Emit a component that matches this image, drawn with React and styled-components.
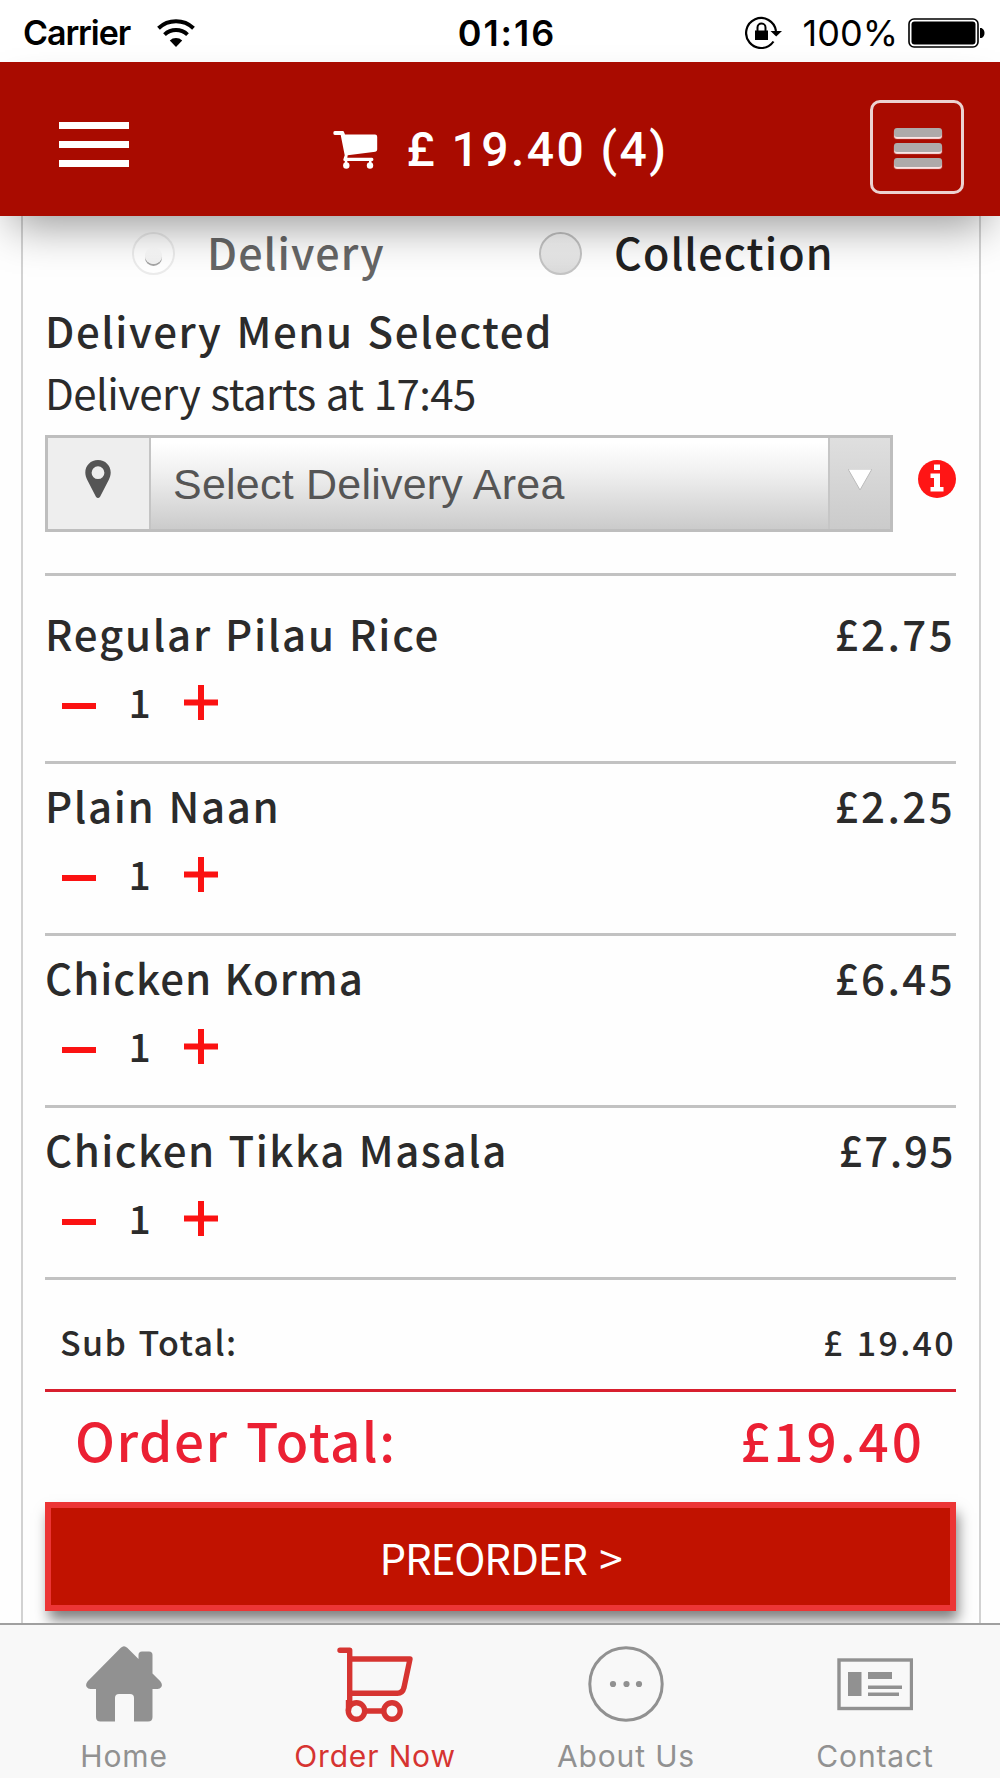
import React from 'react';
import styled, { createGlobalStyle } from 'styled-components';

const SANS = "'Noto Sans CJK SC', 'Noto Sans', sans-serif";
const SYS = "Inter, 'Liberation Sans', sans-serif";

const Global = createGlobalStyle`
  *, *::before, *::after { box-sizing: border-box; }
  body { margin: 0; background: #fff; }
  svg { display: block; flex: none; }
  button { border: 0; background: none; padding: 0; margin: 0; }
`;

const Screen = styled.div`
  width: 1000px;
  height: 1778px;
  display: flex;
  flex-direction: column;
  overflow: hidden;
  background: #fefefe;
  font-family: ${SANS};
  color: #2b2b2b;
`;

const Label = styled.span`
  display: block;
  white-space: pre;
  font-family: ${p => p.$font || SANS};
  font-size: ${p => p.$size}px;
  font-weight: ${p => p.$weight || 400};
  letter-spacing: ${p => p.$track || 0}px;
  word-spacing: ${p => p.$word || 0}px;
  line-height: ${p => p.$line || 50}px;
  color: ${p => p.$color || 'inherit'};
`;

const StatusBar = styled.div`
  height: 62px;
  flex: none;
  display: grid;
  grid-template-columns: 1fr auto 1fr;
  align-items: center;
  padding: 3px 15px 0 23px;
  background: #fff;
  color: #000;
`;
const Clock = styled(Label)`
  padding-left: 6px;
`;
const StatusGroup = styled.div`
  display: flex;
  align-items: center;
  gap: ${p => p.$gap}px;
  justify-content: ${p => (p.$end ? 'flex-end' : 'flex-start')};
`;

const Header = styled.header`
  height: 154px;
  flex: none;
  display: flex;
  align-items: center;
  justify-content: space-between;
  padding: 16px 36px 0 59px;
  background: #a90b00;
  position: relative;
  z-index: 2;
  box-shadow: 0 22px 42px -12px rgba(0, 0, 0, 0.4);
`;
const MenuButton = styled.button`
  display: grid;
  gap: 12px;
  width: 70px;
  margin-bottom: 5px;
`;
const MenuBar = styled.span`
  height: 7px;
  background: #fff;
`;
const CartSummary = styled.div`
  display: flex;
  align-items: center;
  gap: 28px;
  padding: 6px 0 0 3px;
  color: #fff;
`;
const ListButton = styled.button`
  width: 94px;
  height: 94px;
  padding: 1px 0 0 3px;
  border: 3px solid #ecd2d0;
  border-radius: 10px;
  display: flex;
  flex-direction: column;
  align-items: center;
  justify-content: center;
  gap: 6px;
`;
const ListBar = styled.span`
  width: 48px;
  height: 9px;
  border-radius: 3px;
  background: #aeaaaa;
  box-shadow: 0 2px 1px #fbe6e6;
`;

const Panel = styled.main`
  flex: 1;
  margin: 0 19px 0 21px;
  padding: 0 23px 0 22px;
  border-left: 2px solid #d2d2d2;
  border-right: 2px solid #d2d2d2;
`;
const Modes = styled.div`
  display: grid;
  grid-template-columns: 407px 1fr;
  height: 75px;
  padding-left: 87px;
`;
const Mode = styled.div`
  display: flex;
  align-items: center;
  gap: 32px;
`;
const ModeLabel = styled(Label)`
  padding-bottom: 5px;
`;
const Radio = styled.span`
  width: 43px;
  height: 43px;
  border-radius: 50%;
  display: grid;
  place-items: center;
  border: 2px solid ${p => (p.$checked ? '#ececec' : '#c4c4c4')};
  background: ${p => (p.$checked ? '#fff' : 'linear-gradient(#fbfbfb, #dadada)')};
`;
const Dot = styled.span`
  width: 17px;
  height: 17px;
  margin-top: 4px;
  border-radius: 50%;
  background: linear-gradient(#fff, #f0f0f0);
  box-shadow: 0 2px 0 #a5a5a5;
`;
const Notice = styled.div`
  padding-top: 8px;
`;
const AreaRow = styled.div`
  display: flex;
  align-items: center;
  justify-content: space-between;
  margin-top: 12px;
`;
const Select = styled.div`
  width: 848px;
  height: 97px;
  display: flex;
  border: 3px solid #bebebe;
  background: linear-gradient(#fff 5%, #f0f0f0 38%, #cbcbcb);
`;
const PinCell = styled.div`
  width: 103px;
  display: grid;
  place-items: center;
  background: #eee;
  border-right: 2px solid #c4c4c4;
  padding: 0 1px 9px 0;
`;
const SelectValue = styled.div`
  flex: 1;
  display: flex;
  align-items: center;
  padding-left: 22px;
`;
const ArrowCell = styled.div`
  width: 62px;
  display: grid;
  place-items: center;
  border-left: 2px solid #c6c6c6;
  background: linear-gradient(#dfdfdf, #cbcbcb);
  padding: 0 1px 8px 0;
`;
const InfoMark = styled.div`
  padding-bottom: 10px;
`;
const Items = styled.div`
  margin-top: 41px;
  border-top: 3px solid #c2c2c2;
  padding-top: 16px;
`;
const Item = styled.div`
  height: 172px;
  padding-top: 16px;
  border-bottom: 3px solid #c2c2c2;
`;
const Split = styled.div`
  display: flex;
  justify-content: space-between;
  padding: ${p => p.$pad || 0};
`;
const Qty = styled.div`
  display: flex;
  align-items: center;
  height: 40px;
  margin-top: 24px;
  padding-left: 17px;
`;
const Count = styled.div`
  width: 88px;
  padding: 0 1px 3px 0;
  display: flex;
  justify-content: center;
`;
const SubTotal = styled(Split)`
  height: 112px;
  align-items: center;
  border-bottom: 3px solid #d81f2e;
`;
const OrderTotal = styled(Split)`
  height: 110px;
  align-items: center;
  color: #eb2033;
`;
const Preorder = styled.button`
  display: flex;
  width: 100%;
  height: 109px;
  align-items: center;
  justify-content: center;
  border: 6px solid #ec3535;
  background: #c11200;
  color: #fff;
  box-shadow: 3px 10px 13px -1px rgba(0, 0, 0, 0.5);
`;

const TabBar = styled.nav`
  height: 155px;
  flex: none;
  position: relative;
  z-index: 1;
  display: grid;
  grid-template-columns: 248px 254px 248px 250px;
  border-top: 2px solid #a0a0a0;
  background: #f8f8f8;
`;
const Tab = styled.div`
  display: flex;
  flex-direction: column;
  align-items: center;
  gap: 11px;
  padding-top: 21px;
  color: ${p => (p.$active ? '#d63431' : '#919191')};
`;

const Minus = () => (
  <svg width="34" height="36" viewBox="0 0 34 36"><path d="M0 22h34" stroke="#fb1212" strokeWidth="6" /></svg>
);
const Plus = () => (
  <svg width="34" height="36" viewBox="0 0 34 36"><path d="M0 18.500h34M17 1v35" stroke="#fb1212" strokeWidth="6" /></svg>
);
const Wifi = () => (
  <svg width="38" height="28" viewBox="0 0 38 28">
    <g fill="none" stroke="#000" strokeWidth="4">
      <path d="M1.500 9.200a25.500 25.500 0 0 1 35 0" />
      <path d="M7.500 15.600a17 17 0 0 1 23 0" />
    </g>
    <path d="M12.800 21.500a9 9 0 0 1 12.400 0L19 28z" />
  </svg>
);
const RotationLock = () => (
  <svg width="37" height="33" viewBox="0 0 37 33">
    <path d="M28.500 25.500A15 15 0 1 1 31 15" fill="none" stroke="#000" strokeWidth="2.200" />
    <path d="M25.500 15h11.500L31.200 20.500z" />
    <path d="M10 14.500h13v9.500H10z" />
    <path d="M12.500 15v-3.500a4 4 0 0 1 8 0V15" fill="none" stroke="#000" strokeWidth="2" />
  </svg>
);
const Battery = () => (
  <svg width="77" height="30" viewBox="0 0 77 30">
    <rect x="1" y="1" width="69" height="28" rx="5" fill="none" stroke="#000" strokeWidth="1.600" />
    <rect x="3.500" y="3.500" width="64" height="23" rx="3" />
    <path d="M72 10h1.500q3 1.500 3 5t-3 5H72z" />
  </svg>
);
const SolidCart = () => (
  <svg width="45" height="38" viewBox="0 0 45 38" fill="#fff">
    <path d="M1.800 0h7.700q1.400 0 1.700 1.400l.8 2.200H42q2.200 0 2.200 2.200V18.500q0 1.900-1.900 2.200L14.700 24.300l-.4 2.500H39q1.400 0 1.400 1.600T39 30H11.800q-1.600 0-1.500-1.500l1.400-4.200L7.700 4H1.800Q.3 4 .3 2T1.800 0z" />
    <path d="M11.800 29h2.500v3h-2.500zM36 29h2.500v3H36z" />
    <circle cx="13.300" cy="34.500" r="3.200" /><circle cx="37" cy="34.500" r="3.200" />
  </svg>
);
const Pin = () => (
  <svg width="26" height="38" viewBox="0 0 26 38">
    <path fill="#555" fillRule="evenodd" d="M13 0c7.200 0 12.700 5.500 12.700 12.500 0 3-.9 5.200-2 7.400L15.200 36.500q-2.200 3-4.400 0L2.300 19.900C1.200 17.700.3 15.500.3 12.500.3 5.500 5.800 0 13 0zm0 6.300a6.400 6.400 0 1 0 0 12.800 6.400 6.400 0 0 0 0-12.800z" />
  </svg>
);
const Info = () => (
  <svg width="38" height="38" viewBox="0 0 38 38">
    <circle cx="19" cy="19" r="19" fill="#ff1515" />
    <path fill="#fff" d="M16 4.500h6v5.500h-6zM12.500 13.500h9.500v13.500h3.500v4.500h-13v-4.500h3.500v-9h-3.500z" />
  </svg>
);
const Home = () => (
  <svg width="76" height="76" viewBox="0 0 76 76" fill="currentColor">
    <path d="M34.800 1.800q3.200-3 6.400 0L52.500 13V9q0-3.500 3.500-3.500h7q3.500 0 3.500 3.500v18.500l7.800 7.700q2.600 3.300 1 5.800-1.200 2-3.800 2H66.500v28q0 4.500-4.500 4.500H48V52q0-4-4-4H33q-4 0-4 4v23.500H14.500Q10 75.500 10 71V43H4.500Q1.900 43 .7 41q-1.600-2.500 1-5.800z" />
  </svg>
);
const Cart = () => (
  <svg width="76" height="76" viewBox="0 0 76 76" fill="none" stroke="currentColor" strokeWidth="5.400">
    <path d="M3 4.200H12.700V60M12.700 13H73L67 41.500Q65.500 47.300 60.500 47.300H12.700" strokeLinecap="round" strokeLinejoin="round" />
    <circle cx="19.500" cy="65" r="8.200" /><circle cx="55" cy="65" r="8.200" />
    <path d="M27.500 65h19.500M11.500 54v11" />
  </svg>
);
const More = () => (
  <svg width="76" height="76" viewBox="0 0 76 76" fill="currentColor">
    <circle cx="38" cy="38" r="36.200" fill="none" stroke="currentColor" strokeWidth="3" />
    <circle cx="25" cy="38" r="3.100" /><circle cx="38.500" cy="38" r="3.100" /><circle cx="51" cy="38" r="3.100" />
  </svg>
);
const Card = () => (
  <svg width="76" height="76" viewBox="0 0 76 76" fill="currentColor">
    <rect x="2" y="14" width="72.500" height="48.500" fill="none" stroke="currentColor" strokeWidth="3.400" />
    <path d="M11 26h13.500v24H11zM31 26h24v7H31zM31 39.500h34v3.500H31zM31 46.500h31v3.500H31z" />
  </svg>
);

const items = [
  { name: 'Regular Pilau Rice', track: 1.75, price: '£2.75', priceTrack: 2.4 },
  { name: 'Plain Naan', track: 1.65, price: '£2.25', priceTrack: 2.4 },
  { name: 'Chicken Korma', track: 1, price: '£6.45', priceTrack: 2.4 },
  { name: 'Chicken Tikka Masala', track: 1.5, price: '£7.95', priceTrack: 1.6 },
];
const tabs = [
  { name: 'Home', Icon: Home },
  { name: 'Order Now', Icon: Cart, active: true },
  { name: 'About Us', Icon: More },
  { name: 'Contact', Icon: Card },
];

export default function App() {
  return (
    <>
      <Global />
      <Screen>
        <StatusBar>
          <StatusGroup $gap={27}>
            <Label $font={SYS} $size={34} $weight={600} $track={-1.1}>Carrier</Label>
            <Wifi />
          </StatusGroup>
          <Clock $font={SYS} $size={36} $weight={600} $track={2}>01:16</Clock>
          <StatusGroup $gap={10} $end>
            <RotationLock />
            <Label $font={SYS} $size={36}>{' 100%'}</Label>
            <Battery />
          </StatusGroup>
        </StatusBar>
        <Header>
          <MenuButton aria-label="Menu"><MenuBar /><MenuBar /><MenuBar /></MenuButton>
          <CartSummary>
            <SolidCart />
            <Label $font="Roboto, sans-serif" $size={48} $weight={500} $track={2.45}>£ 19.40 (4)</Label>
          </CartSummary>
          <ListButton aria-label="List"><ListBar /><ListBar /><ListBar /></ListButton>
        </Header>
        <Panel>
          <Modes>
            <Mode><Radio $checked><Dot /></Radio><ModeLabel $size={43} $weight={500} $track={1.1} $color="#666">Delivery</ModeLabel></Mode>
            <Mode><Radio /><ModeLabel $size={43} $weight={500} $track={1.1} $color="#222">Collection</ModeLabel></Mode>
          </Modes>
          <Notice>
            <Label $size={42} $weight={500} $track={1.55} $word={3} $line={62}>Delivery Menu Selected</Label>
            <Label $size={42} $track={-0.6} $word={1.5} $line={62}>Delivery starts at 17:45</Label>
          </Notice>
          <AreaRow>
            <Select>
              <PinCell><Pin /></PinCell>
              <SelectValue><Label $font="'Liberation Sans', Arial, sans-serif" $size={43} $track={0.22} $color="#555">Select Delivery Area</Label></SelectValue>
              <ArrowCell><svg width="24" height="21" viewBox="0 0 24 21"><path d="M0 0h24L12 21z" fill="#fff" stroke="#bbb" /></svg></ArrowCell>
            </Select>
            <InfoMark><Info /></InfoMark>
          </AreaRow>
          <Items>
            {items.map(i => (
              <Item key={i.name}>
                <Split $pad="0 1px 0 0">
                  <Label $size={42} $weight={500} $track={i.track} $word={2}>{i.name}</Label>
                  <Label $size={42} $weight={500} $track={i.priceTrack}>{i.price}</Label>
                </Split>
                <Qty><Minus /><Count><Label $size={39} $weight={500} $line={40}>1</Label></Count><Plus /></Qty>
              </Item>
            ))}
          </Items>
          <SubTotal $pad="15px 0 0 15px">
            <Label $size={34} $weight={500} $track={1.4} $word={2}>Sub Total:</Label>
            <Label $size={34} $weight={500} $track={2.3} $word={2}>£ 19.40</Label>
          </SubTotal>
          <OrderTotal $pad="0 31px 17px 30px">
            <Label $size={53} $weight={500} $track={1.5} $word={4}>Order Total:</Label>
            <Label $size={53} $weight={500} $track={3}>£19.40</Label>
          </OrderTotal>
          <Preorder><Label $size={42} $track={-1.1} $word={4}>{'PREORDER >'}</Label></Preorder>
        </Panel>
        <TabBar>
          {tabs.map(({ name, Icon, active }) => (
            <Tab key={name} $active={active}>
              <Icon />
              <Label $font={SYS} $size={30} $track={0.85} $line={46}>{name}</Label>
            </Tab>
          ))}
        </TabBar>
      </Screen>
    </>
  );
}
